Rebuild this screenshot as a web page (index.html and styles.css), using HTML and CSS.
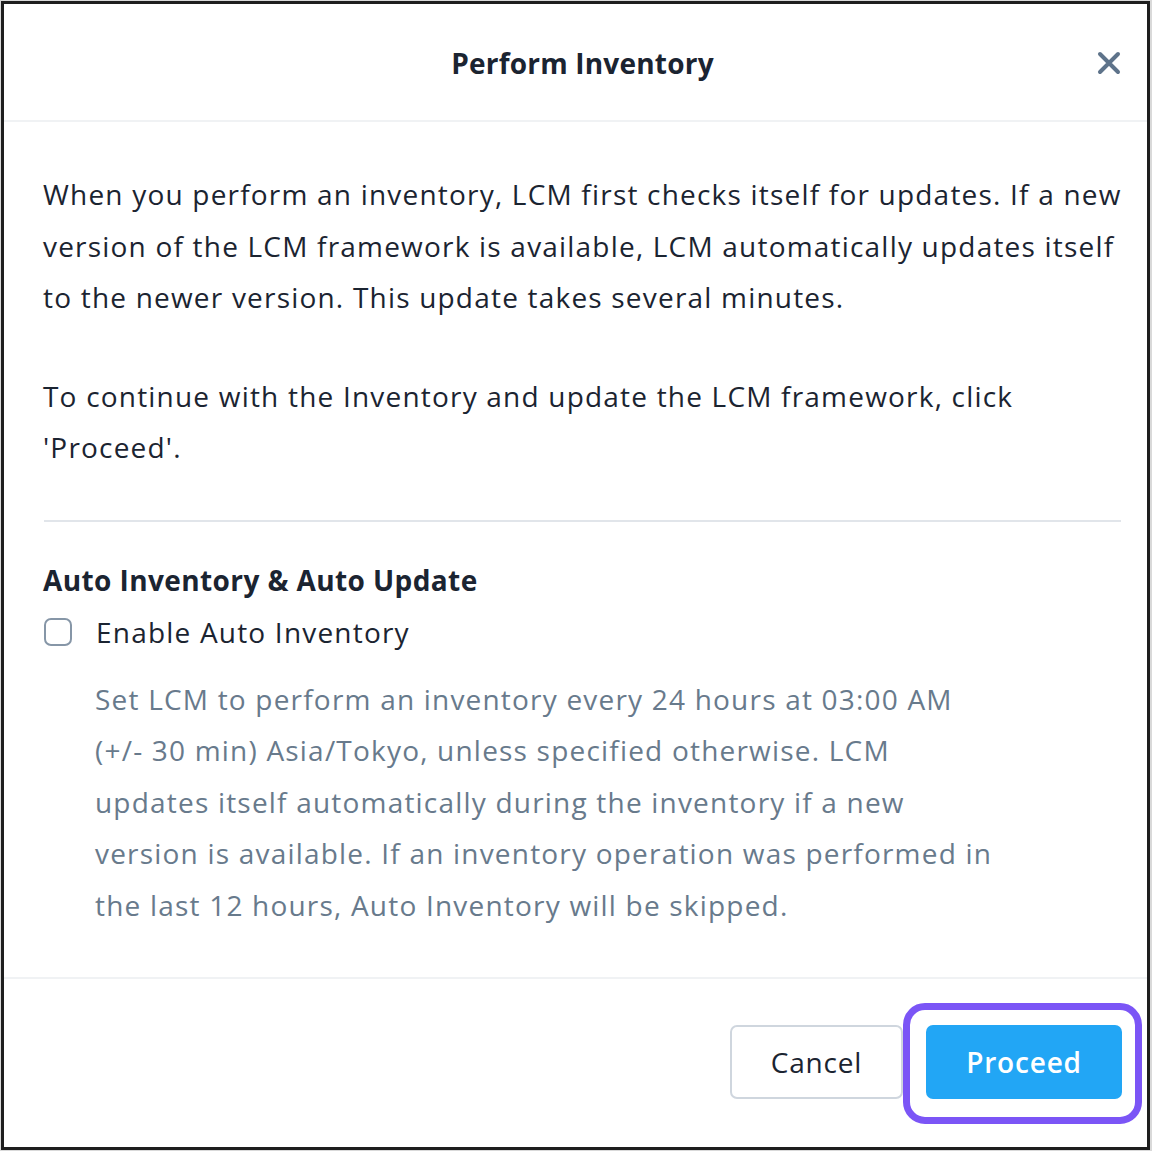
FILE: index.html
```html
<!DOCTYPE html>
<html>
<head>
<meta charset="utf-8">
<link rel="stylesheet" href="styles.css">
</head>
<body>
<div class="frame">
  <div class="header">
    <h1 class="title">Perform Inventory</h1>
    <button class="close" aria-label="Close">
      <svg width="24" height="24" viewBox="0 0 24 24"><path d="M3 3 L21 21 M21 3 L3 21" stroke="#5e738a" stroke-width="4" stroke-linecap="round" fill="none"/></svg>
    </button>
  </div>
  <div class="body">
    <p class="para">When you perform an inventory, LCM first checks itself for updates. If a new<br>version of the LCM framework is available, LCM automatically updates itself<br>to the newer version. This update takes several minutes.</p>
    <p class="para para2">To continue with the Inventory and update the LCM framework, click<br>'Proceed'.</p>
    <hr class="divider">
    <h2 class="subhead">Auto Inventory &amp; Auto Update</h2>
    <label class="check-row">
      <span class="checkbox"></span>
      <span class="check-label">Enable Auto Inventory</span>
    </label>
    <p class="desc">Set LCM to perform an inventory every 24 hours at 03:00 AM<br>(+/- 30 min) Asia/Tokyo, unless specified otherwise. LCM<br>updates itself automatically during the inventory if a new<br>version is available. If an inventory operation was performed in<br>the last 12 hours, Auto Inventory will be skipped.</p>
  </div>
  <div class="footer">
    <button class="btn btn-cancel">Cancel</button>
    <div class="focus-ring">
      <button class="btn btn-primary">Proceed</button>
    </div>
  </div>
</div>
</body>
</html>
```

FILE: styles.css
```css
* { box-sizing: border-box; }
html, body { margin: 0; padding: 0; background: #d9d9d9; }
body {
  font-family: "Open Sans", "Noto Sans", sans-serif;
  color: #1b2431;
}
.frame {
  margin: 1px;
  width: 1149px;
  height: 1149px;
  border: 3px solid #1e1e1e;
  background: #fff;
  display: flex;
  flex-direction: column;
}
.header {
  position: relative;
  height: 118px;
  border-bottom: 2px solid #f0f2f4;
  display: flex;
  align-items: center;
  justify-content: center;
}
.title {
  margin: 0;
  font-size: 28px;
  font-weight: 700;
  letter-spacing: 0.2px;
  padding-top: 1px;
  padding-left: 14px;
}
.close {
  position: absolute;
  right: 26px;
  top: 47px;
  width: 24px;
  height: 24px;
  padding: 0;
  border: 0;
  background: none;
  display: flex;
}
.body {
  padding: 47px 26px 0 39px;
  flex: 1;
}
.para {
  margin: 0;
  font-size: 28px;
  line-height: 51.5px;
  letter-spacing: 1.2px;
  white-space: nowrap;
}
.para2 { margin-top: 47px; }
.divider {
  margin: 46px 0 0 1px;
  border: 0;
  border-top: 2px solid #e1e5ea;
}
.subhead {
  margin: 36px 0 0 0;
  font-size: 28px;
  font-weight: 700;
  line-height: 44px;
  letter-spacing: 0.4px;
}
.check-row {
  display: flex;
  align-items: center;
  gap: 24px;
  margin-top: 8px;
  padding-left: 1px;
}
.checkbox {
  width: 28px;
  height: 28px;
  border: 2px solid #8696a7;
  border-radius: 7px;
  background: #fff;
}
.check-label {
  font-size: 28px;
  line-height: 44px;
  letter-spacing: 1.2px;
}
.desc {
  margin: 20px 0 0 52px;
  font-size: 28px;
  line-height: 51.5px;
  letter-spacing: 1.2px;
  color: #687a8c;
  white-space: nowrap;
}
.footer {
  height: 170px;
  border-top: 2px solid #f0f2f4;
  display: flex;
  justify-content: flex-end;
  align-items: flex-start;
  padding: 24px 5px 0 0;
}
.btn {
  font-family: inherit;
  font-size: 28px;
  height: 74px;
  border-radius: 7px;
  cursor: pointer;
  letter-spacing: 0.8px;
}
.btn-cancel {
  width: 173px;
  margin-top: 22px;
  border: 2px solid #cfd6de;
  background: #fff;
  color: #1b2431;
}
.focus-ring {
  padding: 15px 13px 18px 16px;
  border: 7px solid #7b55f6;
  border-radius: 22px;
}
.btn-primary {
  width: 196px;
  border: 0;
  background: #22a6f5;
  color: #fff;
  font-weight: 600;
}
```
